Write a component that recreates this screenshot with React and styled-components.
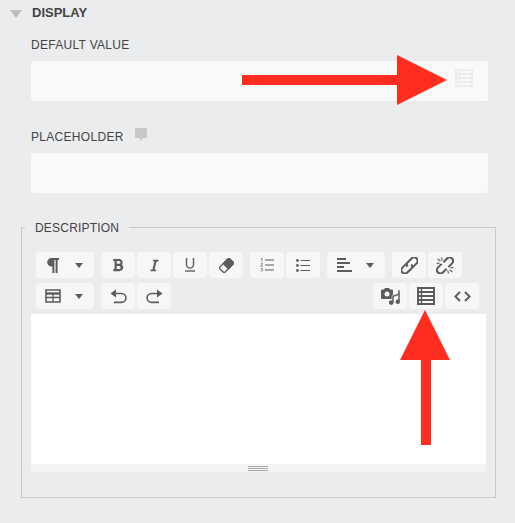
import styled, { createGlobalStyle } from 'styled-components'
import { FaBold, FaItalic } from 'react-icons/fa'

const GlobalStyle = createGlobalStyle`
  html, body {
    margin: 0;
    padding: 0;
    background: #ebecee;
  }
  * {
    box-sizing: border-box;
  }
`

const Page = styled.div`
  position: relative;
  width: 515px;
  height: 523px;
  overflow: hidden;
  padding: 0 19px 0 21px;
  background: #ebecee;
  color: #444;
  font-family: 'Liberation Sans', Arial, sans-serif;
`

const SectionHeader = styled.div`
  display: flex;
  align-items: center;
  gap: 10px;
  height: 24px;
  padding-top: 1px;
  margin-left: -11px;
  font-size: 13px;
  font-weight: 700;
`

const Caret = styled.span`
  width: 0;
  height: 0;
  margin-top: 2px;
  border-left: 6px solid transparent;
  border-right: 6px solid transparent;
  border-top: 8px solid #bdbdbd;
`

const Field = styled.div`
  padding: 0 8px 0 10px;
  margin-bottom: 26px;
`

const Label = styled.label`
  display: flex;
  align-items: center;
  gap: 11px;
  height: 20px;
  margin-top: ${(props) => props.top || 0}px;
  margin-bottom: 6px;
  font-size: 12px;
  letter-spacing: 0.3px;
`

const FakeInput = styled.div`
  display: flex;
  justify-content: flex-end;
  height: 40px;
  padding: 8px 15px;
  background: #f9f9f9;
  border-radius: 2px;
`

const Fieldset = styled.fieldset`
  width: 475px;
  height: 279px;
  margin: 0;
  padding: 17px 9px 0 9px;
  border: 1px solid #c8c9cb;
`

const Legend = styled.legend`
  margin-left: -6px;
  padding: 2px 10px 0;
  font-size: 12px;
  line-height: 14px;
  letter-spacing: 0.2px;
`

const Toolbar = styled.div`
  display: flex;
  flex-direction: column;
  gap: 5px;
  padding: 0 7px 0 5px;
`

const ToolRow = styled.div`
  display: flex;
  gap: 7px;
`

const Group = styled.div`
  display: flex;
  gap: 2px;
  margin-left: ${(props) => (props.right ? 'auto' : 0)};
`

const ToolButton = styled.button`
  display: ${(props) => (props.split ? 'grid' : 'flex')};
  grid-template-columns: 34px 18px;
  align-items: center;
  justify-items: center;
  justify-content: ${(props) => (props.split ? 'start' : 'center')};
  width: ${(props) => (props.split ? 58 : 34)}px;
  height: 26px;
  padding: 0;
  color: #5c5c5c;
  background: #f7f7f7;
  border: 0;
  border-radius: 4px;
`

const DropCaret = styled.span`
  width: 0;
  height: 0;
  border-left: 4px solid transparent;
  border-right: 4px solid transparent;
  border-top: 5px solid #5c5c5c;
`

const Editor = styled.div`
  height: 158px;
  margin-top: 5px;
  background: #fff;
  border-radius: 0 0 4px 4px;
  overflow: hidden;
  display: flex;
  flex-direction: column;
`

const EditArea = styled.div`
  flex: 1;
`

const StatusBar = styled.div`
  display: flex;
  flex-direction: column;
  align-items: center;
  gap: 1px;
  height: 8px;
  padding: 2px 1px 0 0;
  background: #f4f4f4;
`

const GripLine = styled.span`
  width: 20px;
  height: 1px;
  background: #aaa;
`

const OverlayArrow = styled.svg`
  position: absolute;
  left: ${(props) => props.x}px;
  top: ${(props) => props.y}px;
`

const CommentSvg = styled.svg`
  align-self: flex-start;
  margin-top: 1px;
`

const FlipSvg = styled.svg`
  transform: ${(props) => (props.flip ? 'scaleX(-1)' : 'none')};
`

const PilcrowIcon = () => (
  <svg width='12' height='15' viewBox='0 0 12 15' fill='currentColor'>
    <path d='M4.5 0H12v2h-1.4v13H8.6V2H7.4v13H5.4V8.6H4.5a4.3 4.3 0 0 1 0-8.6z' />
  </svg>
)

const EraserIcon = () => (
  <svg width='15' height='15' viewBox='0 0 15 15' fill='none' stroke='currentColor' strokeWidth='1.3'>
    <g transform='rotate(-45 7.5 7.5)'>
      <rect x='0.5' y='3.8' width='14' height='7.4' rx='1.4' />
      <path d='M6.5 3.8h6.6a1.4 1.4 0 0 1 1.4 1.4v4.6a1.4 1.4 0 0 1-1.4 1.4H6.5z' fill='currentColor' />
    </g>
  </svg>
)

const TableIcon = () => (
  <svg width='16' height='14' viewBox='0 0 16 14' fill='none' stroke='currentColor'>
    <path d='M1 1h14v12H1z' strokeWidth='1.6' />
    <path d='M1 4.5h14' strokeWidth='2.4' />
    <path d='M1 8.5h14M8 5v8' strokeWidth='1.3' />
  </svg>
)

const UndoIcon = ({ flip }) => (
  <FlipSvg flip={flip} width='17' height='15' viewBox='0 0 17 15' fill='none' stroke='currentColor'>
    <path d='M5 4.5h6.5a4.2 4.2 0 0 1 0 8.8H4' strokeWidth='1.7' />
    <path d='M6 0.5v8L0.5 4.5z' fill='currentColor' stroke='none' />
  </FlipSvg>
)

const UnderlineIcon = () => (
  <svg width='10' height='14' viewBox='0 0 10 14' fill='none' stroke='currentColor'>
    <path d='M1.5 0v6.6a3.5 3.5 0 0 0 7 0V0' strokeWidth='1.4' />
    <path d='M0 13h10' strokeWidth='1.4' />
  </svg>
)

const OrderedListIcon = () => (
  <svg width='14' height='14' viewBox='0 0 14 14' fill='none' stroke='currentColor'>
    <path d='M5 2h9M5 7h9M5 12h9' strokeWidth='1.2' />
    <path d='M1 .8l1-.6v3.2M.6 5.6c.6-.8 2-.6 2 .3 0 .8-1.8 1.3-2 2.3h2.2M.8 10.4h1.8l-1 1.2c1 0 1.2.5 1 1-.2.6-1.4.7-1.9.2' strokeWidth='.7' />
  </svg>
)

const BulletListIcon = () => (
  <svg width='14' height='13' viewBox='0 0 14 13' fill='none'>
    <path d='M4.5 1.5H14M4.5 6.5H14M4.5 11.5H14' stroke='currentColor' strokeWidth='1.1' />
    <circle cx='1.4' cy='1.5' r='1.4' fill='currentColor' />
    <circle cx='1.4' cy='6.5' r='1.4' fill='currentColor' />
    <circle cx='1.4' cy='11.5' r='1.4' fill='currentColor' />
  </svg>
)

const AlignIcon = () => (
  <svg width='15' height='14' viewBox='0 0 15 14' fill='none' stroke='currentColor' strokeWidth='1.8'>
    <path d='M0 1h9M0 5h13M0 9h7M0 13h15' />
  </svg>
)

const LinkIcon = () => (
  <svg width='17' height='17' viewBox='0 0 17 17' fill='none' stroke='currentColor' strokeWidth='2.1'>
    <g transform='rotate(-45 8.5 8.5)'>
      <path d='M8 5H2a3.5 3.5 0 0 0 0 7h5.5a3 3 0 0 0 3-3' />
      <path d='M9 12h6a3.5 3.5 0 0 0 0-7H9.5a3 3 0 0 0-3 3' />
    </g>
  </svg>
)

const UnlinkIcon = () => (
  <svg width='18' height='17' viewBox='0 0 18 17' fill='none' stroke='currentColor' strokeWidth='2.1'>
    <g transform='rotate(-45 9 8.5)'>
      <path d='M7.8 5H2.5a3.5 3.5 0 0 0 0 7h5.3' />
      <path d='M10.2 5h5.3a3.5 3.5 0 0 1 0 7h-5.3' />
    </g>
    <path d='M1.5 2l3 2M5.5 0.5l.8 3M0.5 6.5l3-.4M16.5 15l-3-2M12.5 16.5l-.8-3M17.5 10.5l-3 .4' strokeWidth='1.1' />
  </svg>
)

const MediaIcon = () => (
  <svg width='19' height='17' viewBox='0 0 19 17' fill='currentColor'>
    <path d='M3 1.5L4 0h4l1 1.5h2a1 1 0 0 1 1 1V10a1 1 0 0 1-1 1H1a1 1 0 0 1-1-1V2.5a1 1 0 0 1 1-1z' />
    <circle cx='6' cy='6' r='2.5' fill='#f7f7f7' />
    <path d='M17 2h2v12h-2V7.5l-4 1.4V14.5h-2V7.5l6-2z' stroke='#f7f7f7' strokeWidth='.5' />
    <circle cx='10.2' cy='14.6' r='2.3' />
    <circle cx='16.8' cy='13.8' r='2.2' />
  </svg>
)

const RowsIcon = ({ color = 'currentColor' }) => (
  <svg width='18' height='18' viewBox='0 0 18 18' fill='none' stroke={color}>
    <path d='M1 1h16v16H1z' strokeWidth='2' />
    <path d='M1 5h16M1 9h16M1 13h16' strokeWidth='2' />
    <path d='M4.5 1v16' strokeWidth='1.4' />
  </svg>
)

const CodeIcon = () => (
  <svg width='17' height='11' viewBox='0 0 17 11' fill='none' stroke='currentColor' strokeWidth='1.9'>
    <path d='M6 1L1.4 5.5 6 10M11 1l4.6 4.5L11 10' />
  </svg>
)

const CommentIcon = () => (
  <CommentSvg width='12' height='14' viewBox='0 0 12 14' fill='#c8c8c8'>
    <path d='M1 0h10a1 1 0 0 1 1 1v8a1 1 0 0 1-1 1H8l-3 3.5V10H1a1 1 0 0 1-1-1V1a1 1 0 0 1 1-1z' />
  </CommentSvg>
)

const App = () => {
  return (
    <Page>
      <GlobalStyle />
      <SectionHeader>
        <Caret />
        DISPLAY
      </SectionHeader>

      <Field>
        <Label top={11}>DEFAULT VALUE</Label>
        <FakeInput>
          <RowsIcon color='#ececec' />
        </FakeInput>
      </Field>

      <Field>
        <Label>
          PLACEHOLDER
          <CommentIcon />
        </Label>
        <FakeInput />
      </Field>

      <Fieldset>
        <Legend>DESCRIPTION</Legend>
        <Toolbar>
          <ToolRow>
            <ToolButton split>
              <PilcrowIcon />
              <DropCaret />
            </ToolButton>
            <Group>
              <ToolButton><FaBold size={14} /></ToolButton>
              <ToolButton><FaItalic size={13} /></ToolButton>
              <ToolButton><UnderlineIcon /></ToolButton>
              <ToolButton><EraserIcon /></ToolButton>
            </Group>
            <Group>
              <ToolButton><OrderedListIcon /></ToolButton>
              <ToolButton><BulletListIcon /></ToolButton>
            </Group>
            <ToolButton split>
              <AlignIcon />
              <DropCaret />
            </ToolButton>
            <Group>
              <ToolButton><LinkIcon /></ToolButton>
              <ToolButton><UnlinkIcon /></ToolButton>
            </Group>
          </ToolRow>
          <ToolRow>
            <ToolButton split>
              <TableIcon />
              <DropCaret />
            </ToolButton>
            <Group>
              <ToolButton><UndoIcon /></ToolButton>
              <ToolButton><UndoIcon flip /></ToolButton>
            </Group>
            <Group right>
              <ToolButton><MediaIcon /></ToolButton>
              <ToolButton><RowsIcon /></ToolButton>
              <ToolButton><CodeIcon /></ToolButton>
            </Group>
          </ToolRow>
        </Toolbar>
        <Editor>
          <EditArea />
          <StatusBar>
            <GripLine />
            <GripLine />
            <GripLine />
          </StatusBar>
        </Editor>
      </Fieldset>

      <OverlayArrow x={242} y={55} width='206' height='50' viewBox='0 0 206 50'>
        <path d='M0 20h155V0l50 25-50 25V30H0z' fill='#ff2d20' />
      </OverlayArrow>
      <OverlayArrow x={400} y={310} width='50' height='136' viewBox='0 0 50 136'>
        <path d='M25 0l25 50H31v85H21V50H0z' fill='#ff2d20' />
      </OverlayArrow>
    </Page>
  )
}

export default App
